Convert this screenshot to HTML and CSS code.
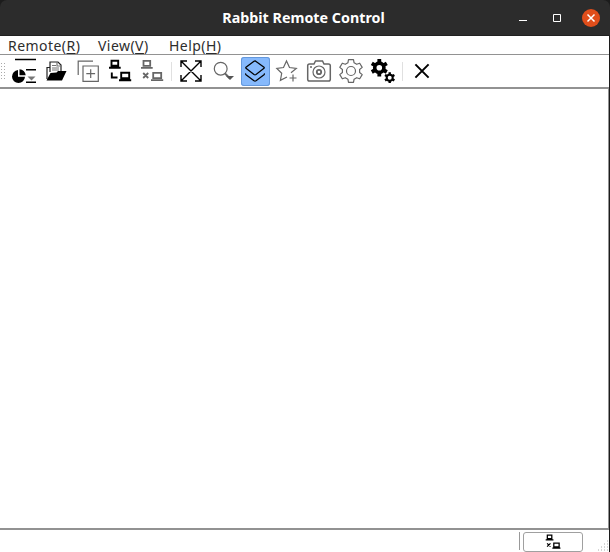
FILE: index.html
```html
<!DOCTYPE html>
<html lang="en">
<head>
<meta charset="utf-8">
<title>Rabbit Remote Control</title>
<link rel="stylesheet" href="styles.css">
</head>
<body>
<div class="window">
  <header class="titlebar">
    <h1 class="title">Rabbit Remote Control</h1>
    <div class="controls">
      <svg class="control" viewBox="0 0 18 18"><path d="M5 11.5h8"/></svg>
      <svg class="control" viewBox="0 0 18 18"><path d="M5.5 5.5h7v7h-7z"/></svg>
      <svg class="control close" viewBox="0 0 18 18"><path d="M5.5 5.5l7 7m0-7l-7 7"/></svg>
    </div>
  </header>
  <div class="frame">
  <nav class="menubar">
    <span class="menu remote">Remote(<u>R</u>)</span>
    <span class="menu view">View(<u>V</u>)</span>
    <span class="menu help">Help(<u>H</u>)</span>
  </nav>
  <div class="toolbar">
    <span class="grip"></span>
    <span class="tool"><svg viewBox="0 0 24 24"><path d="M3 .5h21M14 10.7h10M14 23.3h10" stroke-width="1.6"/><path d="M6 11A6.5 6.5 0 1 0 13 17.8H6z" fill="#000" stroke="none"/><path d="M7.5 10.3v5.9h6.2a6.4 6.4 0 0 0-6.2-5.9z" fill="#000" stroke="none"/><path d="M15.5 17.5h8l-4 4z" fill="#777" stroke="none"/></svg></span>
    <span class="tool"><svg viewBox="0 0 24 24"><path d="M3 20V8.5h3V3h8l3 3v6M6 8v5" stroke="#222" stroke-width="1.2"/><path d="M13 3v4h4M8 6.5h4M8 9h7M8 11h7" stroke="#777"/><path d="M2.5 21.5L6.5 14l6-.5 1.5-1.5h8.5L18 21.5z" fill="#000" stroke="none"/></svg></span>
    <span class="tool"><svg class="muted" viewBox="0 0 24 24"><path d="M2.2 16V2.2H17M7 7h15.3v15.3H7zM14.7 10.3v8.8M10.3 14.7h8.8"/></svg></span>
    <span class="tool"><svg viewBox="0 0 24 24"><path d="M3.5 1.8h6.7v5H3.5zM1 8.8h11.7M3.8 13.5v5h5.7M13.2 13.8h8v5.4h-8zM11 21.2h12.2" stroke-width="1.9"/></svg></span>
    <span class="tool"><svg class="muted" viewBox="0 0 24 24"><path d="M3.5 1.8h6.7v5H3.5zM1 8.8h11.7M3.2 14l5 5m0-5l-5 5M13.2 13.8h8v5.4h-8zM11 21.2h12.2" stroke-width="1.8"/></svg></span>
    <span class="separator"></span>
    <span class="tool"><svg viewBox="0 0 24 24"><path d="M2 2l20 20M22 2L2 22M2 8V2h6M16 2h6v6M22 16v6h-6M8 22H2v-6" stroke-width="1.4"/></svg></span>
    <span class="tool"><svg class="muted" viewBox="0 0 24 24"><circle cx="9.7" cy="9.7" r="6.4"/><path d="M14 14.5l5 5" stroke-width="2"/><path d="M15 17h8l-4 4z" fill="#555" stroke="none"/></svg></span>
    <span class="tool active"><svg viewBox="0 0 24 24"><path d="M12 1.8L21 8.2Q21.5 8.8 21 9.3L13 15.5Q12 16.2 11 15.5L3 9.3Q2.5 8.8 3 8.2L11 2.3Q12 1.6 13 2.3M3 14.5q-.7.7 0 1.3l8 6q1 .7 2 0l8-6q.7-.6 0-1.3" stroke-width="1.2"/></svg></span>
    <span class="tool"><svg class="muted" viewBox="0 0 24 24"><path d="M16 13.8L21.3 9.5 14.5 8.5 11.5 2 8.5 8.5 1.8 9.5 6.7 14.3 5.4 21.3 12 18M18 15.5v7M14.5 19h7"/></svg></span>
    <span class="tool"><svg class="muted" viewBox="0 0 24 24"><path d="M2.5 5H7l1.5-3h7L17 5h4.5q1.8 0 1.8 1.8v13.4q0 1.8-1.8 1.8h-19Q.7 22 .7 20.2V6.8Q.7 5 2.5 5zM3 8h2" stroke-width="1.5"/><circle cx="12" cy="13" r="6"/><circle cx="12" cy="13" r="2.2" stroke-width="1.8"/></svg></span>
    <span class="tool"><svg class="muted" viewBox="0 0 24 24"><path d="M9.5.6H14.5L15.1 3.8 17.7 5.3 20.7 4.2 23.2 8.4 20.6 10.5V13.5L23.2 15.6 20.7 19.8 17.7 18.7 15.1 20.2 14.5 23.4H9.5L8.9 20.2 6.3 18.7 3.3 19.8.8 15.6 3.4 13.5V10.5L.8 8.4 3.3 4.2 6.3 5.3 8.9 3.8z" stroke-linejoin="round"/><circle cx="12" cy="12" r="4.5"/></svg></span>
    <span class="tool"><svg viewBox="0 0 24 24"><circle cx="8.3" cy="8.7" r="4.6" stroke-width="3.6"/><path d="M8.3 0v4m0 9.4v4M.8 4.4l3.4 2m8.2 4.6l3.4 2M.8 13l3.4-2m8.2-4.6l3.4-2" stroke-width="3.8"/><circle cx="18.7" cy="18.7" r="3" stroke-width="2"/><path d="M18.7 13.3v2.4m0 6v2.4M14 16l2 1.1m5.3 3.1l2.1 1.2M14 21.4l2-1.2m5.3-3.1l2.1-1.1" stroke-width="2.4"/></svg></span>
    <span class="separator"></span>
    <span class="tool"><svg viewBox="0 0 24 24"><path d="M5.4 5.4l13.2 13.2m0-13.2L5.4 18.6" stroke-width="2"/></svg></span>
  </div>
  <main class="workspace"></main>
  <footer class="statusbar">
    <span class="divider"></span>
    <button class="status" aria-label="Disconnected"><svg viewBox="0 0 24 24"><path d="M3.5 1.8h6.7v5H3.5zM1 8.8h11.7M3.2 14l5 5m0-5l-5 5M13.2 13.8h8v5.4h-8zM11 21.2h12.2"/></svg></button>
    <svg class="resize" viewBox="0 0 12 12"><path d="M10 1h1M7 4h1M10 4h1M4 7h1M7 7h1M10 7h1M1 10h1M4 10h1M7 10h1M10 10h1"/></svg>
  </footer>
  </div>
</div>
</body>
</html>
```
FILE: styles.css
```css
* { box-sizing: border-box; }
body { margin: 0; background: #1c1c1c; font-family: "Noto Sans", sans-serif; }
.window { width: 610px; height: 552px; display: flex; flex-direction: column; overflow: hidden; }
.titlebar { height: 36px; flex: none; display: grid; grid-template-columns: 1fr auto 1fr; align-items: center; background: #2c2c2c; border-bottom: 1px solid #202020; border-radius: 7px 7px 0 0; color: #fff; }
.title { grid-column: 2; margin: 0 0 0 -3px; font-size: 14.3px; line-height: 34px; font-weight: 700; white-space: nowrap; }
.controls { display: flex; justify-content: flex-end; gap: 16px; padding-right: 10px; }
.control { width: 18px; height: 18px; fill: none; stroke: #fff; stroke-width: 1; }
.close { background: #e04e1b; border-radius: 50%; stroke-width: 1.5; }
.frame { flex: 1; margin-right: 1px; display: flex; flex-direction: column; background: #fff; }
.menubar { height: 19px; flex: none; display: flex; padding-left: 8px; border-bottom: 1px solid #929292; color: #2d2d2d; font-size: 14px; letter-spacing: 0.45px; line-height: 19px; }
.menu { white-space: nowrap; }
.menu u { text-underline-offset: 2px; text-decoration-thickness: 1px; }
.remote { width: 90px; }
.view { width: 71px; }
.toolbar { height: 32px; flex: none; display: flex; align-items: center; }
.grip { width: 8px; height: 19px; background: radial-gradient(circle, #aaa 0.6px, transparent 0.8px) 0 0 / 3px 3px; background-clip: content-box; padding: 0 3px 0 0; }
.tool { width: 29px; height: 29px; margin: 1px 1.5px 0; padding: 0 1px 1px 0; flex: none; display: flex; align-items: center; justify-content: center; border-radius: 3px; }
.tool svg { width: 24px; height: 24px; flex: none; fill: none; stroke: #000; stroke-width: 1.2; overflow: visible; }
.tool .muted { stroke: #666; }
.active { background: #86b9fc; box-shadow: inset 0 0 0 1px #6498dc; }
.separator { width: 1px; height: 19px; margin: 0 3px; background: #e0e0e0; flex: none; }
.workspace { flex: 1; border: solid #929292; border-width: 2px 1px 2px 0; }
.statusbar { height: 22px; flex: none; display: flex; align-items: center; justify-content: flex-end; }
.divider { width: 1px; height: 18px; margin-right: 3px; background: #999; }
.status { width: 60px; height: 20px; margin: 1px 14px 0 0; padding: 0; display: flex; align-items: center; justify-content: center; background: #fff; border: 1px solid #a0a0a0; border-radius: 3px; }
.status svg { width: 16px; height: 16px; fill: none; stroke: #000; stroke-width: 1.9; }
.resize { width: 12px; height: 12px; align-self: flex-end; stroke: #aaa; stroke-width: 1; }
```
